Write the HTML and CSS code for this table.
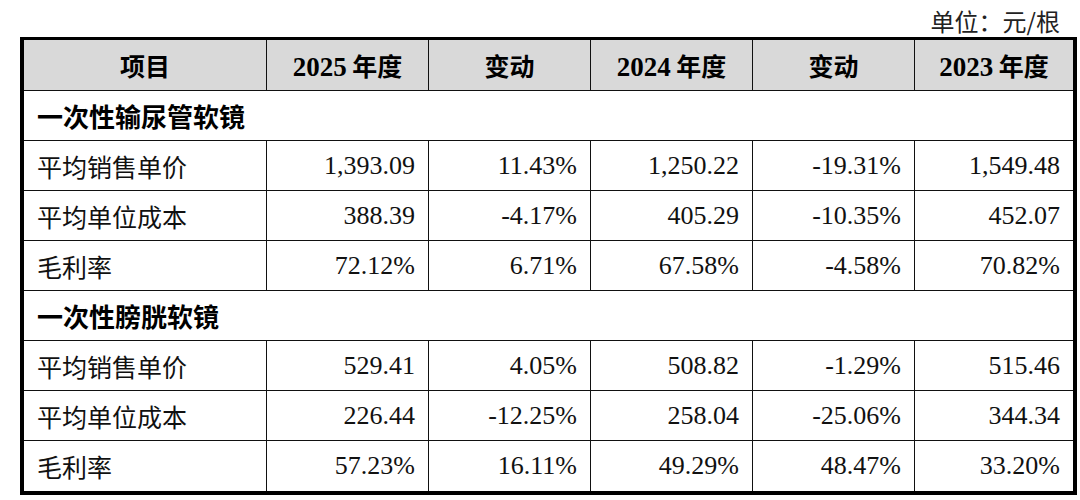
FILE: index.html
```html
<!DOCTYPE html>
<html lang="zh-CN">
<head>
<meta charset="utf-8">
<title>单位成本表</title>
<link rel="stylesheet" href="styles.css">
</head>
<body>
<div class="page">
  <div class="unit">单位：元/根</div>
  <table class="grid">
    <colgroup>
      <col class="c-label">
      <col class="c-num">
      <col class="c-num">
      <col class="c-num">
      <col class="c-num">
      <col class="c-last">
    </colgroup>
    <thead>
      <tr class="head">
        <th class="hcn">项目</th>
        <th><span class="yr">2025</span> 年度</th>
        <th class="hcn">变动</th>
        <th><span class="yr">2024</span> 年度</th>
        <th class="hcn">变动</th>
        <th><span class="yr">2023</span> 年度</th>
      </tr>
    </thead>
    <tbody>
      <tr class="section"><td colspan="6">一次性输尿管软镜</td></tr>
      <tr>
        <td class="label">平均销售单价</td>
        <td class="num">1,393.09</td><td class="num">11.43%</td><td class="num">1,250.22</td><td class="num">-19.31%</td><td class="num">1,549.48</td>
      </tr>
      <tr>
        <td class="label">平均单位成本</td>
        <td class="num">388.39</td><td class="num">-4.17%</td><td class="num">405.29</td><td class="num">-10.35%</td><td class="num">452.07</td>
      </tr>
      <tr>
        <td class="label">毛利率</td>
        <td class="num">72.12%</td><td class="num">6.71%</td><td class="num">67.58%</td><td class="num">-4.58%</td><td class="num">70.82%</td>
      </tr>
      <tr class="section"><td colspan="6">一次性膀胱软镜</td></tr>
      <tr>
        <td class="label">平均销售单价</td>
        <td class="num">529.41</td><td class="num">4.05%</td><td class="num">508.82</td><td class="num">-1.29%</td><td class="num">515.46</td>
      </tr>
      <tr>
        <td class="label">平均单位成本</td>
        <td class="num">226.44</td><td class="num">-12.25%</td><td class="num">258.04</td><td class="num">-25.06%</td><td class="num">344.34</td>
      </tr>
      <tr class="last">
        <td class="label">毛利率</td>
        <td class="num">57.23%</td><td class="num">16.11%</td><td class="num">49.29%</td><td class="num">48.47%</td><td class="num">33.20%</td>
      </tr>
    </tbody>
  </table>
</div>
</body>
</html>
```

FILE: styles.css
```css
html, body {
  margin: 0;
  padding: 0;
  background: #ffffff;
}

body {
  font-family: "Liberation Serif", "Noto Sans CJK SC", serif;
  color: #000;
}

.page {
  width: 1080px;
  height: 500px;
  padding-left: 20px;
  box-sizing: border-box;
}

.unit {
  width: 1057px;
  height: 37px;
  box-sizing: border-box;
  padding-right: 17px;
  text-align: right;
  font-family: "Noto Sans CJK SC", sans-serif;
  font-size: 24px;
  line-height: 41px;
  color: #222;
  overflow: hidden;
}

.grid {
  width: 1057px;
  table-layout: fixed;
  border-collapse: separate;
  border-spacing: 0;
  border-style: solid;
  border-color: #000;
  border-width: 3px 4px 4px 4px;
}

.c-label { width: 243px; }
.c-num { width: 162px; }
.c-last { width: 158px; }

.grid th,
.grid td {
  box-sizing: border-box;
  padding: 0 13px;
  border-right: 1px solid #111;
  border-bottom: 1px solid #111;
  height: 50px;
  white-space: nowrap;
  vertical-align: middle;
}

.grid th:last-child,
.grid td:last-child {
  border-right: none;
}

.grid tr.last td {
  border-bottom: none;
}

.head th {
  height: 51px;
  background: #d9d9d9;
  font-weight: bold;
  text-align: center;
  font-size: 25px;
  font-family: "Noto Sans CJK SC", sans-serif;
}

.head .yr {
  font-family: "Liberation Serif", serif;
  font-size: 27px;
  font-weight: bold;
}

.section td {
  font-family: "Noto Sans CJK SC", sans-serif;
  font-weight: bold;
  font-size: 26px;
  text-align: left;
}

.label {
  font-family: "Noto Sans CJK SC", sans-serif;
  font-size: 25px;
  text-align: left;
  color: #111;
}

.num {
  font-family: "Liberation Serif", serif;
  font-size: 26px;
  text-align: right;
  color: #111;
}
```
